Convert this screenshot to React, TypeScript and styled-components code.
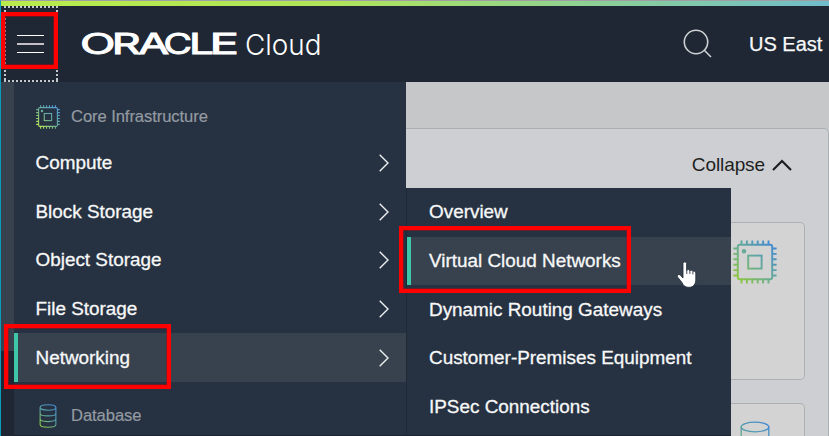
import React from "react";
import styled, { createGlobalStyle, css } from "styled-components";

const GlobalStyle = createGlobalStyle`
  *, *::before, *::after { box-sizing: border-box; }
  body {
    margin: 0;
    overflow: hidden;
    font-family: "Liberation Sans", Arial, sans-serif;
    -webkit-font-smoothing: antialiased;
  }
`;

const Screen = styled.div`
  position: relative;
  width: 829px;
  height: 436px;
  overflow: hidden;
  display: flex;
  flex-direction: column;
  border-left: 1px solid #0b9cbc;
  border-top: 1px solid #9f9ea2;
  background: #1e2733;
`;

const Stripe = styled.div`
  flex: none;
  height: 5px;
  background: linear-gradient(90deg, #b9ec4b 0%, #b0e55a 40%, #84cba5 80%, #70bccb 100%);
`;

const Header = styled.header`
  flex: none;
  height: 76px;
  display: flex;
  align-items: center;
  background: #1e2733;
`;

const MenuButton = styled.button`
  width: 54px;
  height: 76px;
  margin: 0 0 0 3px;
  padding: 0;
  border: 0;
  background: none;
  display: flex;
`;

const Wordmark = styled.svg`
  margin-left: 20px;
  width: 250px;
  height: 76px;
`;

const SearchIcon = styled.svg`
  margin: 0 0 0 354px;
  width: 32px;
  height: 32px;
`;

const Region = styled.span`
  margin-left: 35px;
  font-size: 20px;
  line-height: 24px;
  color: #f7f8f8;
  white-space: nowrap;
  -webkit-text-stroke: 0.25px #f7f8f8;
`;

const Body = styled.div`
  flex: 1;
  min-height: 0;
  display: flex;
`;

const Rail = styled.div`
  flex: none;
  width: 13px;
  height: 269px;
  background: #37424e;
`;

const Menu = styled.nav`
  flex: none;
  width: 392px;
  background: #263141;
  overflow: hidden;
`;

const GroupTitle = styled.div<{ $top: number; $height: number }>`
  display: flex;
  align-items: center;
  height: ${(p) => p.$height}px;
  padding: ${(p) => p.$top}px 0 0 22px;
  font-size: 16.6px;
  letter-spacing: -0.08px;
  color: #949ba2;
  gap: 11px;
  -webkit-text-stroke: 0.2px #949ba2;
  svg { flex: none; }
`;

const highlighted = css`
  background: #37424e;
  border-left-color: #3fc6a8;
`;

const Item = styled.a<{ $active?: boolean; $sub?: boolean }>`
  display: flex;
  align-items: center;
  justify-content: space-between;
  height: ${(p) => (p.$sub ? 48.65 : 48.75)}px;
  padding: ${(p) => (p.$sub ? 0 : 1)}px 17px 0 ${(p) => (p.$sub ? 18 : 17.5)}px;
  border-left: 4px solid transparent;
  font-size: 18.9px;
  line-height: 24px;
  color: #f7f8f8;
  white-space: nowrap;
  -webkit-text-stroke: 0.3px #f7f8f8;
  ${(p) => p.$active && highlighted}
`;

const Content = styled.main`
  flex: 1;
  min-width: 0;
  position: relative;
  padding-top: 46px;
  background: #c6c7c9;
`;

const Panel = styled.section`
  height: 340px;
  padding: 24px 23px 0 0;
  border: 1px solid #abb0b4;
  border-left: 0;
  border-top-right-radius: 5px;
  background: #cecfd3;
`;

const Collapse = styled.div`
  display: flex;
  align-items: center;
  justify-content: flex-end;
  gap: 7px;
  height: 24px;
  margin: 0 13px 45px 0;
  font-size: 19px;
  letter-spacing: -0.1px;
  color: #1d1f21;
`;

const Card = styled.article<{ $height: number }>`
  height: ${(p) => p.$height}px;
  margin-bottom: 23px;
  padding: 17px 27px 0 0;
  display: flex;
  justify-content: flex-end;
  border: 1px solid #abb0b2;
  border-left: 0;
  border-radius: 0 5px 5px 0;
  background: #d3d3d3;
`;

const Submenu = styled.nav`
  position: absolute;
  top: 106px;
  left: 0;
  width: 325px;
  height: 248px;
  background: #263141;
  border-left: 1px solid #1f2936;
  overflow: hidden;
`;

const FootLine = styled.div`
  position: absolute;
  left: 13px;
  top: 434px;
  width: 717px;
  height: 1px;
  background: #1d2431;
`;

const Callout = styled.div<{ $x: number; $y: number; $w: number; $h: number }>`
  position: absolute;
  left: ${(p) => p.$x}px;
  top: ${(p) => p.$y}px;
  width: ${(p) => p.$w}px;
  height: ${(p) => p.$h}px;
  border: 4px solid #fe0000;
  box-shadow: inset 0 0 0 0.5px #a50b12;
`;

const Cursor = styled.svg`
  position: absolute;
  left: 675px;
  top: 260px;
`;

const Chip = ({ size, id, from, to, w }: { size: number; id: string; from: string; to: string; w: number }) => (
  <svg width={size} height={size} viewBox="0 0 44 44" fill="none" stroke={`url(#${id})`} strokeWidth={w}>
    <defs>
      <linearGradient id={id} gradientUnits="userSpaceOnUse" x1="4" y1="40" x2="40" y2="4">
        <stop offset="0" stopColor={from} />
        <stop offset="0.5" stopColor="#66ab98" />
        <stop offset="1" stopColor={to} />
      </linearGradient>
    </defs>
    <rect x="4.8" y="4.8" width="34.4" height="34.4" rx="2" />
    <rect x="15.2" y="15.6" width="13.4" height="13" />
    <circle cx="11" cy="11.2" r="1.3" fill="#66ab98" />
    {[8.5, 13.9, 19.3, 24.7, 30.1, 35.5].map((v) => (
      <path key={v} d={`M${v} .4V4.8M${v} 39.2v4.4M.4 ${v}H4.8M39.2 ${v}h4.4`} />
    ))}
  </svg>
);

const Cylinder = ({ w, h, id, from, to, sw }: { w: number; h: number; id: string; from: string; to: string; sw: number }) => (
  <svg width={w} height={h} viewBox="0 0 30 42" fill="none" stroke={`url(#${id})`} strokeWidth={sw}>
    <defs>
      <linearGradient id={id} gradientUnits="userSpaceOnUse" x1="1" y1="36" x2="29" y2="4">
        <stop offset="0" stopColor={from} />
        <stop offset="0.5" stopColor="#559fa5" />
        <stop offset="1" stopColor={to} />
      </linearGradient>
    </defs>
    <ellipse cx="15" cy="6" rx="13.8" ry="4.8" />
    <path d="M1.2 6v30c0 2.7 6 4.8 13.8 4.8s13.8-2.1 13.8-4.800V6M1.2 16c0 2.7 6 4.8 13.8 4.8s13.8-2.1 13.8-4.8M1.2 26c0 2.7 6 4.8 13.8 4.8s13.8-2.1 13.8-4.8" />
  </svg>
);

const Arrow = () => (
  <svg width="10" height="18" viewBox="0 0 10 18" fill="none" stroke="#eceeef" strokeWidth="1.4">
    <path d="M.7.8 9 9 .7 17.2" />
  </svg>
);

/* Each letter of the wordmark has its own start and set width. */
const brand: [string, number, number][] = [
  ["O", 2, 35.5],
  ["R", 33.8, 29],
  ["A", 60.3, 31],
  ["C", 85.5, 28.5],
  ["L", 111, 25],
  ["E", 131.5, 29.5],
];

const services = ["Compute", "Block Storage", "Object Storage", "File Storage", "Networking"];
const networking = [
  "Overview",
  "Virtual Cloud Networks",
  "Dynamic Routing Gateways",
  "Customer-Premises Equipment",
  "IPSec Connections",
];

export default function App() {
  return (
    <>
      <GlobalStyle />
      <Screen>
        <Stripe />
        <Header>
          <MenuButton aria-label="Menu">
            <svg width="54" height="76" fill="none">
              <path d="M0 1H54M0 75H54" stroke="#c3c8cb" strokeWidth="2" strokeDasharray="2 2" />
              <path d="M1 0V76M53 0V76" stroke="#c3c8cb" strokeWidth="2" strokeDasharray="2 2" />
              <path d="M13 29.5h27M13 46.5h27" stroke="#fff" />
              <path d="M13 38h27" stroke="#c4bfc6" strokeWidth="2" />
            </svg>
          </MenuButton>
          <Wordmark viewBox="0 0 250 76" fill="#fff" fontFamily="Inter, sans-serif" fontSize="28">
            <text y="48.2" fontWeight="400" stroke="#fff" strokeWidth="0.9">
              {brand.map(([letter, x, width]) => (
                <tspan key={letter} x={x} textLength={width} lengthAdjust="spacingAndGlyphs">{letter}</tspan>
              ))}
            </text>
            <text x="167" y="48.5" fontWeight="300" textLength="76.5" lengthAdjust="spacingAndGlyphs">
              Cloud
            </text>
          </Wordmark>
          <SearchIcon viewBox="0 0 32 32" fill="none" stroke="#cdd1d3" strokeWidth="1.6">
            <circle cx="14" cy="14" r="11.7" />
            <path d="m22.3 22.3 6.7 6.7" />
          </SearchIcon>
          <Region>US East</Region>
        </Header>
        <Body>
          <Rail />
          <Menu>
            <GroupTitle $top={13} $height={56}>
              <Chip size={24} id="menuChip" from="#b9ea55" to="#519ee0" w={2} />
              Core Infrastructure
            </GroupTitle>
            {services.map((name) => (
              <Item key={name} $active={name === "Networking"}>
                {name}
                <Arrow />
              </Item>
            ))}
            <GroupTitle $top={15} $height={54}>
              <Cylinder w={24} h={24} id="menuDb" from="#8ccb50" to="#4a8fd6" sw={1.9} />
              Database
            </GroupTitle>
          </Menu>
          <Content>
            <Panel>
              <Collapse>
                Collapse
                <svg width="20" height="14" viewBox="0 0 20 14" fill="none" stroke="#1d1f21" strokeWidth="2.2">
                  <path d="m1 12 9-9 9 9" />
                </svg>
              </Collapse>
              <Card $height={158}>
                <Chip size={44} id="cardChip" from="#8fc63c" to="#4189d2" w={1.9} />
              </Card>
              <Card $height={158}>
                <Cylinder w={44} h={42} id="cardDb" from="#8fc63c" to="#4189d2" sw={1.3} />
              </Card>
            </Panel>
            <Submenu>
              {networking.map((name) => (
                <Item key={name} $sub $active={name === "Virtual Cloud Networks"}>
                  {name}
                </Item>
              ))}
            </Submenu>
          </Content>
        </Body>
        <FootLine />
        <Callout $x={0} $y={11} $w={57} $h={57} />
        <Callout $x={3} $y={323} $w={167} $h={65} />
        <Callout $x={398} $y={225} $w={232} $h={67} />
        <Cursor width="22" height="28" viewBox="0 0 22 28" fill="#fff" stroke="#1e2733" strokeWidth="0.8">
          <path d="M7 2.5c0-2 3.6-2 3.6 0v7c.5-1.4 3-1.2 3.2.4.6-1 2.8-.8 3 .7 1-.8 3-.4 3 1.4v6c0 5-2 8.3-7 8.3-4 0-5.500-2-7-5L1.500 16c-1-2 1.500-3.200 3-1.700L7 17z" />
          <path d="M10.800 9v4M13.900 10v3M16.900 11v2.500" fill="none" />
        </Cursor>
      </Screen>
    </>
  );
}
